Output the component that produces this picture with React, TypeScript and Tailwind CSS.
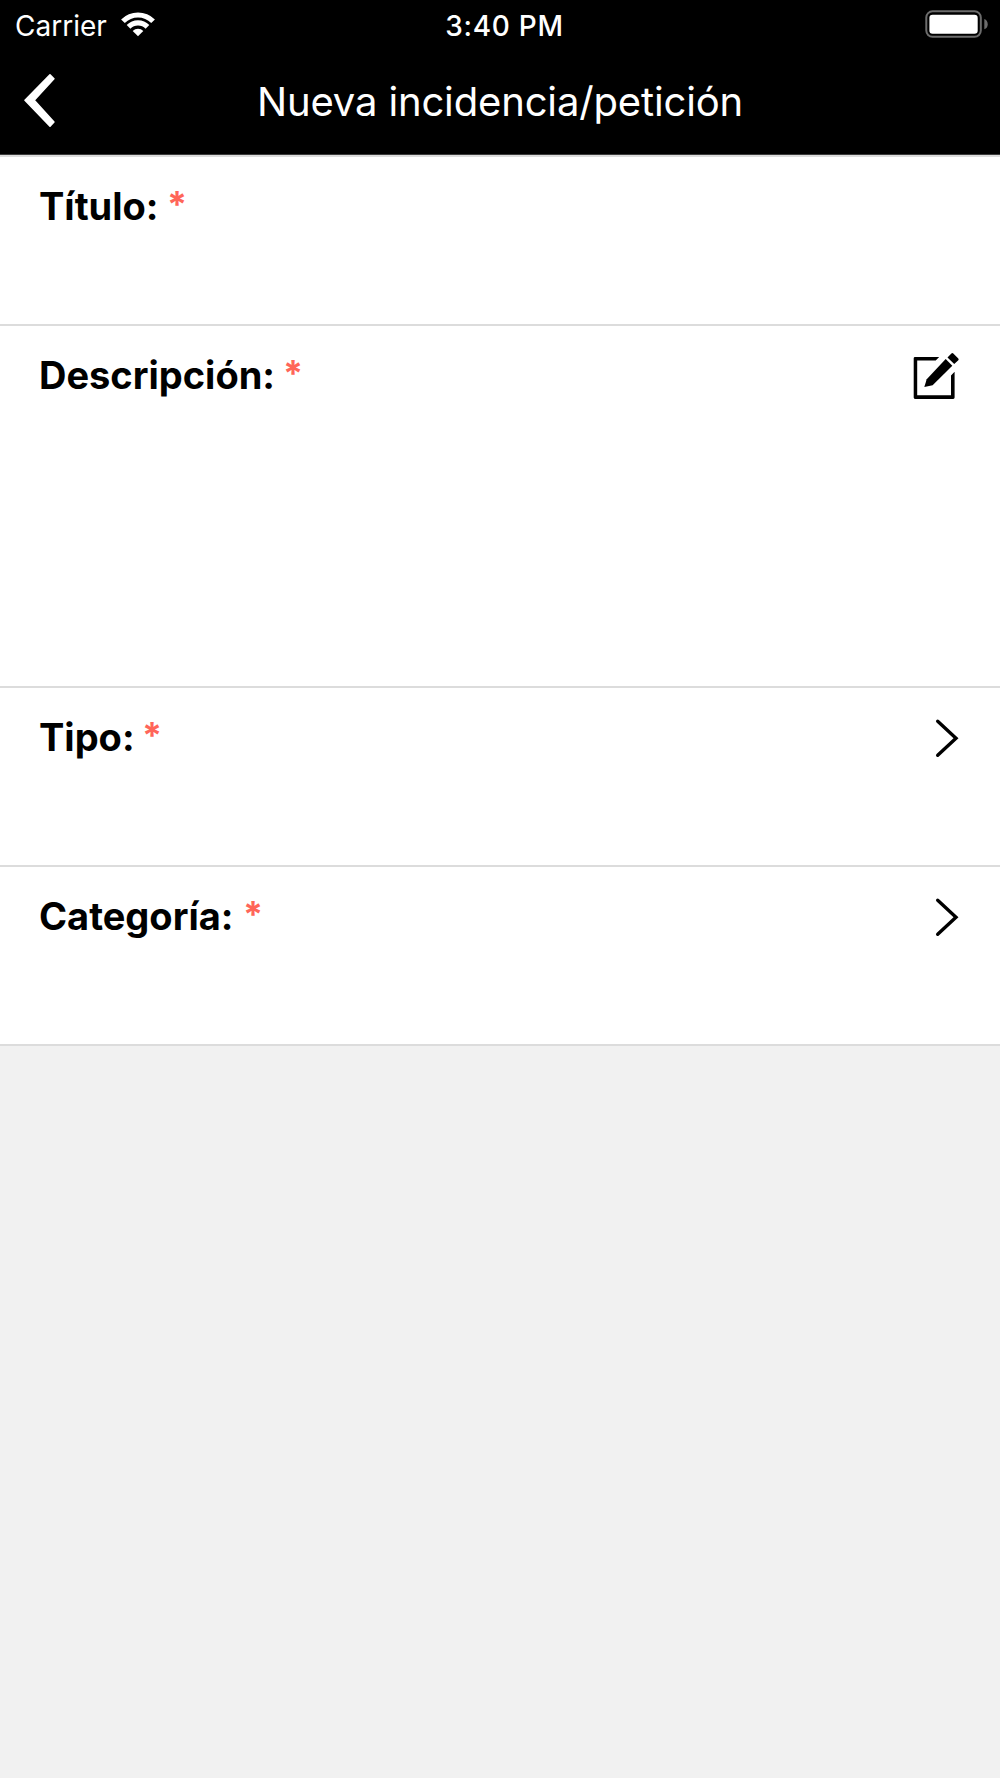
import type { ReactNode } from "react";

function WifiIcon() {
  return (
    <svg className="ml-[13px] h-[26px] w-9" viewBox="0 0 36 26" fill="white">
      <path d="M18 25.3 L12.7 20 A7.5 7.5 0 0 1 23.3 20 Z" />
      <path d="M10.4 17.7 L6.7 14 A16 16 0 0 1 29.3 14 L25.6 17.7 A10.7 10.7 0 0 0 10.4 17.7 Z" />
      <path d="M4.8 12.1 L1.1 8.4 A23.9 23.9 0 0 1 34.9 8.4 L31.2 12.1 A18.6 18.6 0 0 0 4.8 12.1 Z" />
    </svg>
  );
}

function BatteryIcon() {
  return (
    <svg className="h-7 w-16" viewBox="0 0 64 28">
      <rect x="1.3" y="1.3" width="54.5" height="25.5" rx="6.2" fill="none" stroke="#6c6c6c" strokeWidth="2" />
      <rect x="4.4" y="4.7" width="48.3" height="19" rx="3.2" fill="white" />
      <path d="M59.3 9 A5.6 5.6 0 0 1 59.3 19.3 Z" fill="#6c6c6c" />
    </svg>
  );
}

function BackIcon() {
  return (
    <svg className="h-14 w-8" viewBox="0 0 32 56" fill="white" stroke="white" strokeWidth="1.6" strokeLinejoin="round">
      <path d="M27 2.8 L30.9 6.7 L11.2 28.3 L30.9 50 L27 54.2 L2 28.3 Z" />
    </svg>
  );
}

function EditIcon() {
  return (
    <svg className="h-[50px] w-[47px]" viewBox="0 0 47 50" fill="black">
      <path d="M26.2 6 H2 Q0.7 6 0.7 7.3 V46.6 Q0.7 48 2 48 H40.2 Q41.6 48 41.6 46.6 V20.8 L38 24.4 V44.3 H4.2 V9.6 H22.7 Z" />
      <path d="M11.3 36.1 L13.7 28.3 L32.7 8.1 L39.3 14.7 L19.6 34.3 Z" />
      <path d="M34.5 6.4 L38.4 2.5 Q39.3 1.6 40.3 2.5 L45.3 7.4 Q46.1 8.3 45.3 9.2 L41.2 13.1 Z" />
    </svg>
  );
}

function ChevronIcon() {
  return (
    <svg className="h-10 w-6" viewBox="0 0 24 40" fill="none" stroke="black" strokeWidth="3.4" strokeLinecap="round">
      <path d="M2.7 3.2 L21 20.2 L2.7 37.3" />
    </svg>
  );
}

type FieldProps = { label: string; labelWidth: string; height: string; icon?: ReactNode };

function Field({ label, labelWidth, height, icon }: FieldProps) {
  return (
    <section className={`flex items-start justify-between border-b-2 border-[#dcdcdc] bg-white pl-[39px] ${height}`}>
      <div className="mt-[26px] flex text-[38px] leading-[46px]">
        <span className={`whitespace-nowrap font-bold ${labelWidth}`}>{label}</span>
        <span className="-mt-0.5 text-[36px] font-bold text-[#ff6659]">*</span>
      </div>
      {icon}
    </section>
  );
}

export default function App() {
  return (
    <main className="flex h-[1778px] w-[1000px] flex-col overflow-hidden bg-[#f1f1f1] font-['Inter',sans-serif] text-black">
      <header className="h-[157px] border-b-2 border-[#dcdcdc] bg-black text-white">
        <div className="grid h-[52px] grid-cols-3 items-start text-[28px] leading-[34px]">
          <div className="flex pl-[15px] pt-[9px]">
            <span className="w-[92px] whitespace-nowrap">Carrier</span>
            <span className="pt-[2px]"><WifiIcon /></span>
          </div>
          <span className="pl-[9px] pt-[9px] text-center font-medium tracking-[0.7px]">3:40 PM</span>
          <div className="flex justify-end pr-[11px] pt-[10px]"><BatteryIcon /></div>
        </div>
        <div className="grid h-[102px] grid-cols-[80px_1fr_80px] items-start">
          <div className="pl-[23px] pt-5"><BackIcon /></div>
          <h1 className="whitespace-nowrap pt-[26px] text-center text-[40px] font-normal leading-[48px] tracking-[-0.15px]">Nueva incidencia/petición</h1>
        </div>
        <div className="h-px bg-[#3b3b3b]" />
      </header>
      <Field label="Título:" labelWidth="w-[128px]" height="h-[169px]" />
      <Field
        label="Descripción:"
        labelWidth="w-[244px]"
        height="h-[362px]"
        icon={<div className="mr-10 mt-[25px]"><EditIcon /></div>}
      />
      <Field
        label="Tipo:"
        labelWidth="w-[103px]"
        height="h-[179px]"
        icon={<div className="mr-[41px] mt-[30px]"><ChevronIcon /></div>}
      />
      <Field
        label="Categoría:"
        labelWidth="w-[204px]"
        height="h-[179px]"
        icon={<div className="mr-[41px] mt-[30px]"><ChevronIcon /></div>}
      />
    </main>
  );
}
